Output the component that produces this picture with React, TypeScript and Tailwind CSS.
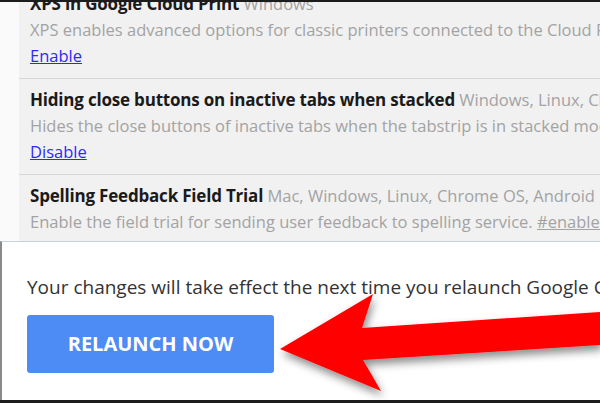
import React from "react";

type Flag = {
  title: string;
  platforms: string;
  desc: React.ReactNode;
  action: string;
};

const flags: Flag[] = [
  {
    title: "XPS in Google Cloud Print",
    platforms: "Windows",
    desc: "XPS enables advanced options for classic printers connected to the Cloud Print",
    action: "Enable",
  },
  {
    title: "Hiding close buttons on inactive tabs when stacked",
    platforms: "Windows, Linux, Chrome OS",
    desc: "Hides the close buttons of inactive tabs when the tabstrip is in stacked mode.",
    action: "Disable",
  },
  {
    title: "Spelling Feedback Field Trial",
    platforms: "Mac, Windows, Linux, Chrome OS, Android",
    desc: (
      <>
        Enable the field trial for sending user feedback to spelling service.{" "}
        <span className="underline">#enable-spelling-feedback</span>
      </>
    ),
    action: "Enable",
  },
];

const Arrow = () => (
  <svg
    className="absolute left-0 top-0 pointer-events-none"
    width="600"
    height="403"
    viewBox="0 0 600 403"
  >
    <defs>
      <filter id="shadow" x="-10%" y="-10%" width="130%" height="150%">
        <feDropShadow dx="2" dy="5" stdDeviation="4" floodColor="#000" floodOpacity="0.45" />
      </filter>
    </defs>
    <polygon
      points="280,347 373,292 362,326 600,310 600,343 363,358 381,389"
      fill="#ff0000"
      filter="url(#shadow)"
    />
  </svg>
);

const App = () => {
  return (
    <main
      className="relative w-[600px] h-[403px] overflow-hidden bg-white border-t-[2px] border-[#1c1c1c]"
      style={{ fontFamily: '"Open Sans", "Noto Sans", sans-serif' }}
    >
      <div className="flex h-[239px] overflow-hidden">
        <div className="w-[19px] shrink-0 bg-[#fafafa]" />
        <div className="flex-1 bg-[#f1f1f1] overflow-hidden">
          <div className="-mt-[19px] whitespace-nowrap">
            {flags.map((f, i) => (
              <div key={i} className="pl-[11px] pt-[10px] pb-[9px] border-b border-[#d6d6d6]">
                <div className="leading-[22px] text-[16.5px]">
                  <span className="font-bold text-[#1a1a1a] text-[17px] tracking-[-0.2px]">{f.title}</span>{" "}
                  <span className="text-[#a3a3a3]">{f.platforms}</span>
                </div>
                <div className="mt-[2px] leading-[26px] text-[16.5px] text-[#a3a3a3]">{f.desc}</div>
                <div className="leading-[26px] text-[16.5px]">
                  <a href="#" className="text-[#2a2aff] underline">
                    {f.action}
                  </a>
                </div>
              </div>
            ))}
          </div>
        </div>
      </div>

      <div className="h-[159px] bg-white border-t border-[#c9d1dc] border-l-2 border-l-[#8a8a8a] pl-[25px]">
        <p className="pt-[32px] leading-[26px] text-[19px] text-[#333] whitespace-nowrap">
          Your changes will take effect the next time you relaunch Google Chrome.
        </p>
        <button
          type="button"
          className="mt-[15px] w-[247px] h-[58px] rounded-[3px] bg-[#4d8cf5] text-white font-bold text-[20px]"
        >
          RELAUNCH NOW
        </button>
      </div>

      <div className="absolute left-0 bottom-0 w-full h-[3px] bg-[#1c1c1c]" />
      <Arrow />
    </main>
  );
};

export default App;
